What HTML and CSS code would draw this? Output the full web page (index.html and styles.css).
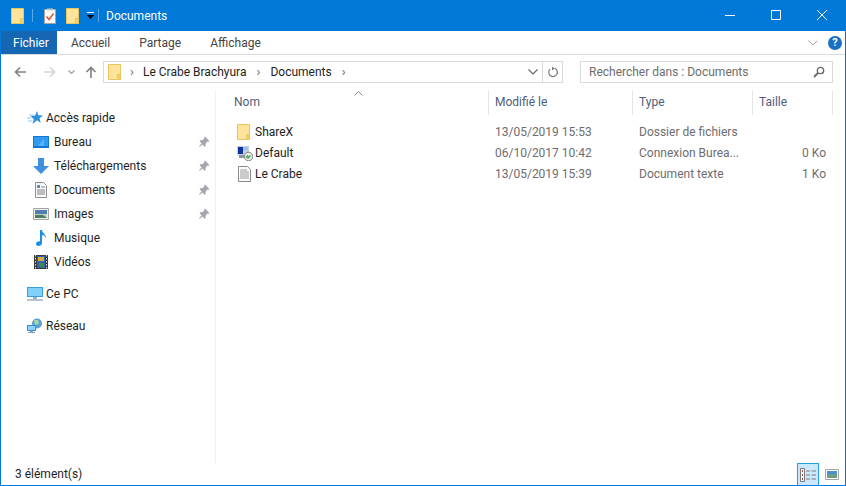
FILE: index.html
```html
<!DOCTYPE html>
<html lang="fr">
<head>
    <meta charset="UTF-8">
    <title>Documents</title>
    <link rel="stylesheet" href="styles.css">
</head>
<body>
  <svg class="defs" width="0" height="0">
    <symbol id="folder" viewBox="0 0 13 16">
      <path d="M.5 .5h12v15H.500z" fill="#fde49a" stroke="#e9c55f"/>
      <path d="M9.500 10.500h3v5h-3z" fill="#f9d064" stroke="#e9c55f"/>
    </symbol>
    <symbol id="pin" viewBox="0 0 12 12">
      <path d="M7 .5l4.500 4.500-1 .8-1-.3-2 2.200.2 2-1 1-2.200-2.300L1.500 11 1 10.500l2.600-3.200L1.500 5.100l1-1 2 .2 2-2-.2-1z" fill="#a3a7ab"/>
    </symbol>
  </svg>

  <div class="window">
    <!-- barre de titre -->
    <header class="titlebar">
      <svg class="qa-folder"><use href="#folder"/></svg>
      <span class="qa-sep"></span>
      <svg class="qa-doc" viewBox="0 0 12 16">
        <path d="M.5 1.500h11v14H.500z" fill="#fafafa" stroke="#a5a5a5"/>
        <path d="M3 .5h6v2H3z" fill="#c9c9c9"/>
        <path d="M2.500 8.500l2.500 3 4.500-6" fill="none" stroke="#e0512b" stroke-width="1.400"/>
      </svg>
      <svg class="qa-folder qa-folder2"><use href="#folder"/></svg>
      <svg class="qa-more" viewBox="0 0 9 9">
        <path d="M1 1h7v1H1z" fill="#fff"/>
        <path d="M1 4h7L4.500 8z" fill="#000"/>
      </svg>
      <span class="qa-sep qa-sep-last"></span>
      <span class="title">Documents</span>
      <div class="win-buttons">
        <svg class="win-btn" viewBox="0 0 46 31"><path d="M18 15.500h10" stroke="#fff" fill="none"/></svg>
        <svg class="win-btn" viewBox="0 0 46 31"><path d="M18.500 10.500h9v9h-9z" stroke="#fff" fill="none"/></svg>
        <svg class="win-btn" viewBox="0 0 46 31"><path d="M18 10l10 10M28 10L18 20" stroke="#fff" fill="none"/></svg>
      </div>
    </header>

    <!-- onglets -->
    <nav class="tabs">
      <span class="tab tab-file">Fichier</span>
      <span class="tab">Accueil</span>
      <span class="tab">Partage</span>
      <span class="tab">Affichage</span>
      <svg class="ribbon-chevron" viewBox="0 0 10 6"><path d="M.5 .5L5 5 9.500 .5" fill="none" stroke="#a5a5a5"/></svg>
      <span class="help">?</span>
    </nav>

    <!-- barre d'adresse -->
    <div class="navbar">
      <svg class="nav-icon" viewBox="0 0 12 12"><path d="M12 6H1.500M6 1.500L1.500 6 6 10.500" fill="none" stroke="#7f7f7f" stroke-width="1.600"/></svg>
      <svg class="nav-icon nav-forward" viewBox="0 0 12 12"><path d="M0 6h10.500M6 1.500L10.500 6 6 10.500" fill="none" stroke="#d4d4d4" stroke-width="1.600"/></svg>
      <svg class="nav-recent" viewBox="0 0 7 4"><path d="M.5 .5L3.500 3.500 6.500 .5" fill="none" stroke="#a0a0a0" stroke-width="1.200"/></svg>
      <svg class="nav-icon nav-up" viewBox="0 0 12 12"><path d="M6 12V1.500M1.500 6L6 1.500 10.500 6" fill="none" stroke="#7f7f7f" stroke-width="1.600"/></svg>
      <div class="address">
        <svg class="address-folder"><use href="#folder"/></svg>
        <span class="crumb-sep crumb-sep-first">›</span>
        <span class="crumb">Le Crabe Brachyura</span>
        <span class="crumb-sep">›</span>
        <span class="crumb">Documents</span>
        <span class="crumb-sep">›</span>
        <svg class="address-drop" viewBox="0 0 10 6"><path d="M.5 .5L5 5 9.500 .5" fill="none" stroke="#666" stroke-width="1.200"/></svg>
        <span class="address-refresh">
          <svg viewBox="0 0 12 12" width="12" height="12"><path d="M7.500 2.200A4.300 4.300 0 1 1 3 3.200" fill="none" stroke="#777" stroke-width="1.200"/><path d="M5 .5v4l2.500-2z" fill="#777"/></svg>
        </span>
      </div>
      <div class="search">
        <span>Rechercher dans : Documents</span>
        <svg viewBox="0 0 12 12" width="12" height="12"><circle cx="7.500" cy="4.500" r="3.200" fill="none" stroke="#666" stroke-width="1.300"/><path d="M5 7L1 11" stroke="#666" stroke-width="1.800"/></svg>
      </div>
    </div>

    <div class="content">
      <!-- panneau de navigation -->
      <aside class="sidebar">
        <div class="side-item top">
          <svg class="side-icon" viewBox="0 0 16 16"><path d="M10 1l1.300 4.300 4.700.2-3.500 2.800 1.200 4.700-3.700-2.700L5.500 14l1.300-4.800L3.500 6l4.700-.5z" fill="#2b90e0"/><path d="M2 5h4M0 8h4M1 11h4" stroke="#8cc6f2"/></svg>
          <span>Accès rapide</span>
        </div>
        <div class="side-item child">
          <svg class="side-icon" viewBox="0 0 16 16"><path d="M0 2h16v12H0z" fill="#0f78d4"/><path d="M1 3h14v9H1z" fill="#2f9cf0"/><path d="M5 12l6-7v7z" fill="#58b4f6"/></svg>
          <span>Bureau</span>
          <svg class="pin"><use href="#pin"/></svg>
        </div>
        <div class="side-item child">
          <svg class="side-icon" viewBox="0 0 16 16"><path d="M5 0h6v8h5l-8 8-8-8h5z" fill="#3f8fe0"/></svg>
          <span>Téléchargements</span>
          <svg class="pin"><use href="#pin"/></svg>
        </div>
        <div class="side-item child">
          <svg class="side-icon" viewBox="0 0 16 16"><path d="M2.500 .5h8l3 3v12h-11z" fill="#fbfbfb" stroke="#8f8f8f"/><path d="M4 3h3v3H4z" fill="#4a90d0"/><path d="M8 5h4M4 8h8M4 10h8M4 12h8" stroke="#7f7f7f"/></svg>
          <span>Documents</span>
          <svg class="pin"><use href="#pin"/></svg>
        </div>
        <div class="side-item child">
          <svg class="side-icon" viewBox="0 0 16 16"><path d="M.5 2.500h15v11H.500z" fill="#eee" stroke="#a5a5a5"/><path d="M2 4h12v4H2z" fill="#4e7fae"/><path d="M2 8h12v4H2z" fill="#b9cfc4"/><path d="M2 9h8l4 3H2z" fill="#4f7a62"/></svg>
          <span>Images</span>
          <svg class="pin"><use href="#pin"/></svg>
        </div>
        <div class="side-item child">
          <svg class="side-icon" viewBox="0 0 16 16"><path d="M7 0h2c0 3 4 4 4 8-1-2-2-3-4-3v8C9 15 7.500 16 5.500 16S3 14.800 3 13.500 4.800 11 7 11.300z" fill="#1a8fe8"/></svg>
          <span>Musique</span>
        </div>
        <div class="side-item child">
          <svg class="side-icon" viewBox="0 0 16 16"><path d="M1 1h14v14H1z" fill="#3a3a3a"/><path d="M4 2h8v12H4z" fill="#2d62b5"/><path d="M5 3h6v4H5z" fill="#d9a93a"/><path d="M6 9h5v4H6z" fill="#3d8a3d"/><path d="M2.500 1v14M13.500 1v14" stroke="#ddd" stroke-dasharray="1.500 1.500"/></svg>
          <span>Vidéos</span>
        </div>
        <div class="side-item top group">
          <svg class="side-icon" viewBox="0 0 16 16"><path d="M0 1h16v10H0z" fill="#3b9de0"/><path d="M1 2h14v8H1z" fill="#7fd0fb"/><path d="M6 11h4v2H6z" fill="#9ab0c0"/><path d="M0 13h16v2H0z" fill="#b8c4cc"/></svg>
          <span>Ce PC</span>
        </div>
        <div class="side-item top group">
          <svg class="side-icon" viewBox="0 0 16 16"><circle cx="10" cy="5.500" r="5" fill="#5a9fd8"/><path d="M7 2h4l1 4-4 1z" fill="#a8d4a0"/><path d="M0 7h9v6H0z" fill="#2f8fdc"/><path d="M1 8h7v4H1z" fill="#8ed2f8"/><path d="M3 13h3v1H3zM1 14h7v1H1z" fill="#8aa0b0"/></svg>
          <span>Réseau</span>
        </div>
      </aside>

      <!-- liste des fichiers -->
      <main class="files">
        <svg class="sort-arrow" viewBox="0 0 9 5"><path d="M.5 4.500L4.500 .5l4 4" fill="none" stroke="#8a8a8a"/></svg>
        <div class="row head">
          <span>Nom</span>
          <span>Modifié le</span>
          <span>Type</span>
          <span>Taille</span>
        </div>
        <div class="row file first">
          <span class="name"><svg class="file-folder"><use href="#folder"/></svg>ShareX</span>
          <span>13/05/2019 15:53</span>
          <span>Dossier de fichiers</span>
          <span class="size"></span>
        </div>
        <div class="row file">
          <span class="name">
            <svg class="file-icon" viewBox="0 0 16 16"><path d="M0 1h12v9H0z" fill="#c6cfdc"/><path d="M1 2h5v7H1z" fill="#12329c"/><path d="M6 2h5v3H6z" fill="#9fc0e8"/><path d="M2 10h7v3H2z" fill="#8d97a6"/><circle cx="11.500" cy="11.500" r="4.300" fill="#e8e8e8" stroke="#808080"/><path d="M9 12.500l2-2M10.500 13.500l3-3" stroke="#2f9a3a" stroke-width="1.200"/></svg>Default
          </span>
          <span>06/10/2017 10:42</span>
          <span>Connexion Burea...</span>
          <span class="size">0 Ko</span>
        </div>
        <div class="row file">
          <span class="name">
            <svg class="file-icon" viewBox="0 0 16 16"><path d="M1.500 .5h9l3 3v12h-12z" fill="#fbfbfb" stroke="#8a8a8a"/><path d="M3 4h7M3 6h9M3 8h9M3 10h9M3 12h9" stroke="#9a9a9a"/></svg>Le Crabe
          </span>
          <span>13/05/2019 15:39</span>
          <span>Document texte</span>
          <span class="size">1 Ko</span>
        </div>
      </main>
    </div>

    <!-- barre d'état -->
    <footer class="statusbar">
      <span>3 élément(s)</span>
      <div class="views">
        <span class="view active">
          <svg viewBox="0 0 16 14" width="16" height="14"><path d="M.5 .5h4v13h-4z" fill="#f4f4f4" stroke="#7a7a7a"/><path d="M2 2h1v2H2z" fill="#c0504d"/><path d="M2 6h1v2H2zM2 10h1v2H2z" fill="#a05050"/><path d="M6 3h4M11.500 3H16M6 7h4M11.500 7H16M6 11h4M11.500 11H16" stroke="#7a7a7a"/></svg>
        </span>
        <span class="view">
          <svg viewBox="0 0 14 11" width="14" height="11"><path d="M.5 .5h13v10H.500z" fill="#fff" stroke="#a5a5a5"/><path d="M2 2h10v3H2z" fill="#4a90d0"/><path d="M2 5h10v4H2z" fill="#6f9a84"/></svg>
        </span>
      </div>
    </footer>
  </div>
</body>
</html>
```

FILE: styles.css
```css
* {
    box-sizing: border-box;
}

body {
    margin: 0;
    font-family: Roboto, "Liberation Sans", sans-serif;
    font-size: 12px;
    color: #1e1e1e;
    background: #fff;
    overflow: hidden;
}

.defs {
    display: block;
    height: 0;
}

.window {
    width: 846px;
    height: 486px;
    display: flex;
    flex-direction: column;
    border: 1px solid #0078d7;
    border-top: 0;
}

/* barre de titre */
.titlebar {
    height: 31px;
    flex: none;
    display: flex;
    align-items: center;
    margin: 0 -1px;
    padding-left: 11px;
    background: #0078d7;
    color: #fff;
}

.qa-folder {
    width: 13px;
    height: 16px;
    flex: none;
}

.qa-doc {
    width: 12px;
    height: 16px;
    flex: none;
}

.qa-sep {
    width: 1px;
    height: 13px;
    margin: 0 11px 0 8px;
    background: #5aa9e6;
}

.qa-folder2 {
    margin-left: 10px;
}

.qa-more {
    width: 9px;
    height: 9px;
    margin-left: 7px;
}

.qa-sep-last {
    margin: 0 7px 0 3px;
}

.title {
    flex: 1;
}

.win-buttons {
    display: flex;
    margin-right: 1px;
}

.win-btn {
    width: 46px;
    height: 31px;
}

/* onglets */
.tabs {
    height: 24px;
    flex: none;
    display: flex;
    align-items: center;
    border-bottom: 1px solid #dadbdc;
}

.tab {
    height: 23px;
    display: flex;
    align-items: center;
    padding: 1px 15px 0 14px;
    color: #444;
}

.tab-file {
    width: 56px;
    padding: 1px 0 0 12px;
    background: #1567b3;
    color: #fff;
}

.ribbon-chevron {
    width: 10px;
    height: 6px;
    margin-left: auto;
    margin-right: 10px;
}

.help {
    width: 14px;
    height: 14px;
    margin-right: 3px;
    border-radius: 50%;
    background: #1a6fc4;
    color: #fff;
    font-size: 11px;
    font-weight: 700;
    line-height: 14px;
    text-align: center;
}

/* barre d'adresse */
.navbar {
    height: 35px;
    flex: none;
    display: flex;
    align-items: center;
    padding: 0 12px 2px 13px;
}

.nav-icon {
    width: 12px;
    height: 12px;
    flex: none;
}

.nav-forward {
    margin-left: 18px;
}

.nav-recent {
    width: 7px;
    height: 4px;
    margin-left: 12px;
}

.nav-up {
    margin-left: 10px;
}

.address {
    width: 460px;
    height: 22px;
    display: flex;
    align-items: center;
    margin-left: 6px;
    padding-left: 4px;
    border: 1px solid #d9d9d9;
}

.address-folder {
    width: 13px;
    height: 16px;
    flex: none;
}

.crumb-sep {
    width: 24px;
    color: #666;
    font-size: 13px;
    text-align: center;
}

.crumb-sep-first {
    width: 22px;
}

.address-drop {
    width: 10px;
    height: 6px;
    margin-left: auto;
    margin-right: 4px;
}

.address-refresh {
    width: 20px;
    height: 20px;
    display: flex;
    align-items: center;
    justify-content: center;
    border-left: 1px solid #d9d9d9;
}

.search {
    width: 253px;
    height: 22px;
    display: flex;
    align-items: center;
    justify-content: space-between;
    margin-left: auto;
    padding: 0 7px 0 8px;
    border: 1px solid #d9d9d9;
    color: #6d6d6d;
}

/* panneau de navigation */
.content {
    flex: 1;
    display: flex;
    min-height: 0;
}

.sidebar {
    width: 215px;
    flex: none;
    padding-top: 16px;
    border-right: 1px solid #f0f0f0;
}

.side-item {
    height: 24px;
    display: flex;
    align-items: center;
}

.side-item.top {
    padding-left: 26px;
}

.side-item.child {
    padding-left: 32px;
}

.side-item.group {
    margin-top: 8px;
}

.side-icon {
    width: 16px;
    height: 16px;
    flex: none;
    margin-right: 3px;
}

.side-item.child .side-icon {
    margin-right: 5px;
}

.pin {
    width: 12px;
    height: 12px;
    margin-left: auto;
    margin-right: 5px;
}

/* liste des fichiers */
.files {
    position: relative;
    flex: 1;
    padding-left: 11px;
}

.sort-arrow {
    position: absolute;
    left: 138px;
    top: 1px;
    width: 9px;
    height: 5px;
}

.row {
    display: grid;
    grid-template-columns: 262px 144px 120px 80px;
    align-items: center;
}

.row > span {
    padding-left: 6px;
    white-space: nowrap;
}

.head {
    height: 25px;
    color: #4c607a;
}

.head > span {
    height: 25px;
    line-height: 25px;
    border-right: 1px solid #e5e5e5;
}

.head > span:first-child {
    padding-left: 7px;
}

.file {
    height: 21px;
    color: #6d6d6d;
}

.file.first {
    margin-top: 6px;
}

.file .name {
    display: flex;
    align-items: center;
    padding-left: 10px;
    color: #1e1e1e;
}

.file-icon {
    width: 16px;
    height: 16px;
    flex: none;
    margin-right: 2px;
}

.file-folder {
    width: 13px;
    height: 16px;
    flex: none;
    margin-right: 5px;
}

.file .size {
    padding-right: 7px;
    text-align: right;
}

/* barre d'état */
.statusbar {
    height: 22px;
    flex: none;
    display: flex;
    align-items: center;
    justify-content: space-between;
    padding-left: 14px;
}

.views {
    display: flex;
    align-items: center;
    height: 22px;
}

.view {
    width: 22px;
    height: 22px;
    display: flex;
    align-items: center;
    justify-content: center;
}

.view.active {
    background: #cce8ff;
    border: 1px solid #26a0da;
    border-bottom: 0;
}

.view:last-child {
    width: 26px;
}
```
